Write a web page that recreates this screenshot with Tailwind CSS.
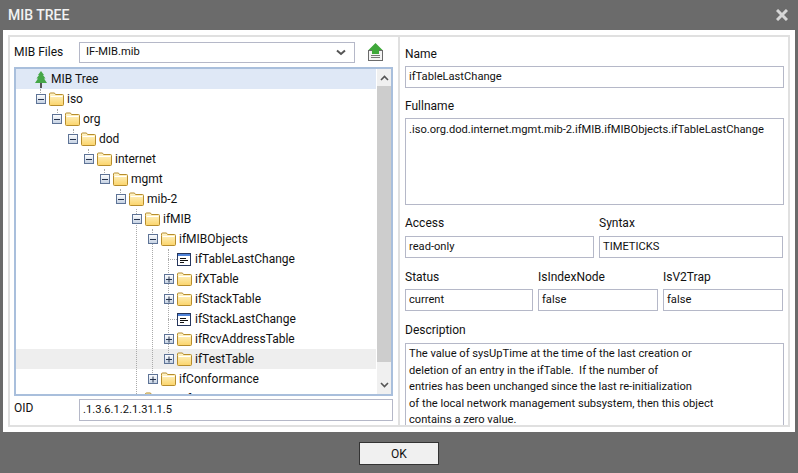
<!DOCTYPE html>
<html lang="en">
<head>
    <meta charset="UTF-8" />
    <title>MIB Tree</title>
    <script src="https://cdn.jsdelivr.net/npm/@tailwindcss/browser@4"></script>
</head>
<body class="w-[798px] h-[473px] overflow-hidden bg-[#6b6b6b] font-['Roboto',sans-serif] text-[12px] text-[#111]">

    <!-- icon sheet -->
    <svg class="absolute w-0 h-0">
        <defs>
            <linearGradient id="gFolder" x1="0" y1="0" x2="0" y2="1">
                <stop offset="0" stop-color="#fff6cf" />
                <stop offset="1" stop-color="#fbd46a" />
            </linearGradient>
            <linearGradient id="gExp" x1="0" y1="0" x2="0" y2="1">
                <stop offset="0" stop-color="#ffffff" />
                <stop offset="1" stop-color="#c3d0e2" />
            </linearGradient>
            <symbol id="folder" viewBox="0 0 15 14">
                <path d="M0.5 3.5V2Q0.5 1 1.5 1H5Q6 1 6.5 2.5H13.5Q14.5 2.5 14.5 3.5V12.5Q14.5 13.5 13.5 13.5H1.5Q0.5 13.5 0.5 12.5Z" fill="url(#gFolder)" stroke="#b78d2c" />
                <path d="M1.5 4.5H13.5" stroke="#fff" />
            </symbol>
            <symbol id="minus" viewBox="0 0 10 10">
                <rect x="0.5" y="0.5" width="9" height="9" fill="url(#gExp)" stroke="#5e7396" />
                <path d="M2 5.5H8" stroke="#26344f" />
            </symbol>
            <symbol id="plus" viewBox="0 0 10 10">
                <rect x="0.5" y="0.5" width="9" height="9" fill="url(#gExp)" stroke="#5e7396" />
                <path d="M2 5.5H8M5 2.5V8.5" stroke="#26344f" />
            </symbol>
            <symbol id="leaf" viewBox="0 0 14 13">
                <rect x="0.5" y="0.5" width="13" height="12" fill="#fff" stroke="#26365c" />
                <rect x="1" y="1" width="12" height="2" fill="#4f83d8" />
                <path d="M3 5.5H9M3 7.5H11M3 9.5H7" stroke="#111" />
            </symbol>
        </defs>
    </svg>

    <header class="h-[30px] flex items-center justify-between pl-[8px] pr-[10px]">
        <h1 class="text-[14px] font-medium text-[#f2f2f2]">MIB TREE</h1>
        <svg width="12" height="12" viewBox="0 0 12 12"><path d="M1 1L11 11M11 1L1 11" stroke="#d6d6d6" stroke-width="3" /></svg>
    </header>

    <div class="mx-[3px] h-[402px] bg-white p-[5px]">
        <div class="h-[392px] border-2 border-[#e0e0e0] flex overflow-hidden">

            <!-- left panel -->
            <section class="w-[388px] shrink-0 pl-[4px] pr-[5px] pt-[4px]">
                <div class="flex items-center h-[22px]">
                    <label class="w-[65px] shrink-0">MIB Files</label>
                    <div class="w-[276px] h-[21px] border border-[#b5b8c8] flex items-center justify-between pl-[6px] pr-[8px] text-[11.15px]">
                        <span>IF-MIB.mib</span>
                        <svg width="10" height="7" viewBox="0 0 10 7"><path d="M1 1.5L5 5L9 1.5" fill="none" stroke="#555" stroke-width="2" /></svg>
                    </div>
                    <svg class="ml-[13px]" width="15" height="18" viewBox="0 0 15 18">
                        <rect x="0.5" y="7.5" width="14" height="10" fill="#f4f4f4" stroke="#6b6b6b" />
                        <path d="M3 12.5H12M3 14.5H12" stroke="#777" />
                        <path d="M7.5 0L14.5 7H11V11H4V7H0.5Z" fill="#3fa83a" />
                    </svg>
                </div>

                <!-- tree -->
                <div class="relative mt-[4px] w-[379px] h-[329px] border-2 border-[#a9bfdc] flex overflow-hidden">
                    <div class="relative w-[360px] shrink-0 overflow-hidden">
                        <!-- dotted guides -->
                        <div class="absolute left-[8px] top-0 h-[11px] w-[8px] border-l border-b border-dotted border-[#aaa]"></div>
                        <div class="absolute left-[24px] top-[20px] h-[6px] border-l border-dotted border-[#aaa]"></div>
                        <div class="absolute left-[41px] top-[40px] h-[6px] border-l border-dotted border-[#aaa]"></div>
                        <div class="absolute left-[57px] top-[60px] h-[6px] border-l border-dotted border-[#aaa]"></div>
                        <div class="absolute left-[72px] top-[80px] h-[6px] border-l border-dotted border-[#aaa]"></div>
                        <div class="absolute left-[88px] top-[100px] h-[6px] border-l border-dotted border-[#aaa]"></div>
                        <div class="absolute left-[104px] top-[120px] h-[6px] border-l border-dotted border-[#aaa]"></div>
                        <div class="absolute left-[120px] top-[140px] h-[189px] border-l border-dotted border-[#aaa]"></div>
                        <div class="absolute left-[136px] top-[160px] h-[146px] border-l border-dotted border-[#aaa]"></div>
                        <div class="absolute left-[152px] top-[180px] h-[106px] border-l border-dotted border-[#aaa]"></div>
                        <div class="absolute left-[152px] top-[190px] w-[9px] border-t border-dotted border-[#aaa]"></div>
                        <div class="absolute left-[152px] top-[250px] w-[9px] border-t border-dotted border-[#aaa]"></div>

                        <div class="relative h-5 flex items-center bg-[#dfe8f6] pl-[19px]">
                            <svg width="12" height="17" viewBox="0 0 12 17">
                                <path d="M6 0L9 4H8L10.5 7.5H9L12 12H0L3 7.5H1.5L4 4H3Z" fill="#46a748" />
                                <rect x="5" y="12" width="2" height="5" fill="#555" />
                            </svg>
                            <span class="ml-[4px]">MIB Tree</span>
                        </div>
                        <div class="relative h-5 flex items-center pl-[20px]"><svg class="w-[10px] h-[10px]"><use href="#minus" /></svg><svg class="w-[15px] h-[14px] ml-[3px]"><use href="#folder" /></svg><span class="ml-[3px]">iso</span></div>
                        <div class="relative h-5 flex items-center pl-[36px]"><svg class="w-[10px] h-[10px]"><use href="#minus" /></svg><svg class="w-[15px] h-[14px] ml-[3px]"><use href="#folder" /></svg><span class="ml-[3px]">org</span></div>
                        <div class="relative h-5 flex items-center pl-[52px]"><svg class="w-[10px] h-[10px]"><use href="#minus" /></svg><svg class="w-[15px] h-[14px] ml-[3px]"><use href="#folder" /></svg><span class="ml-[3px]">dod</span></div>
                        <div class="relative h-5 flex items-center pl-[68px]"><svg class="w-[10px] h-[10px]"><use href="#minus" /></svg><svg class="w-[15px] h-[14px] ml-[3px]"><use href="#folder" /></svg><span class="ml-[3px]">internet</span></div>
                        <div class="relative h-5 flex items-center pl-[84px]"><svg class="w-[10px] h-[10px]"><use href="#minus" /></svg><svg class="w-[15px] h-[14px] ml-[3px]"><use href="#folder" /></svg><span class="ml-[3px]">mgmt</span></div>
                        <div class="relative h-5 flex items-center pl-[100px]"><svg class="w-[10px] h-[10px]"><use href="#minus" /></svg><svg class="w-[15px] h-[14px] ml-[3px]"><use href="#folder" /></svg><span class="ml-[3px]">mib-2</span></div>
                        <div class="relative h-5 flex items-center pl-[116px]"><svg class="w-[10px] h-[10px]"><use href="#minus" /></svg><svg class="w-[15px] h-[14px] ml-[3px]"><use href="#folder" /></svg><span class="ml-[3px]">ifMIB</span></div>
                        <div class="relative h-5 flex items-center pl-[132px]"><svg class="w-[10px] h-[10px]"><use href="#minus" /></svg><svg class="w-[15px] h-[14px] ml-[3px]"><use href="#folder" /></svg><span class="ml-[3px]">ifMIBObjects</span></div>
                        <div class="relative h-5 flex items-center pl-[161px]"><svg class="w-[14px] h-[13px]"><use href="#leaf" /></svg><span class="ml-[4px]">ifTableLastChange</span></div>
                        <div class="relative h-5 flex items-center pl-[148px]"><svg class="w-[10px] h-[10px]"><use href="#plus" /></svg><svg class="w-[15px] h-[14px] ml-[3px]"><use href="#folder" /></svg><span class="ml-[3px]">ifXTable</span></div>
                        <div class="relative h-5 flex items-center pl-[148px]"><svg class="w-[10px] h-[10px]"><use href="#plus" /></svg><svg class="w-[15px] h-[14px] ml-[3px]"><use href="#folder" /></svg><span class="ml-[3px]">ifStackTable</span></div>
                        <div class="relative h-5 flex items-center pl-[161px]"><svg class="w-[14px] h-[13px]"><use href="#leaf" /></svg><span class="ml-[4px]">ifStackLastChange</span></div>
                        <div class="relative h-5 flex items-center pl-[148px]"><svg class="w-[10px] h-[10px]"><use href="#plus" /></svg><svg class="w-[15px] h-[14px] ml-[3px]"><use href="#folder" /></svg><span class="ml-[3px]">ifRcvAddressTable</span></div>
                        <div class="h-5 flex items-center bg-[#eeeeee] pl-[148px]"><svg class="relative w-[10px] h-[10px]"><use href="#plus" /></svg><svg class="w-[15px] h-[14px] ml-[3px]"><use href="#folder" /></svg><span class="ml-[3px]">ifTestTable</span></div>
                        <div class="relative h-5 flex items-center pl-[132px]"><svg class="w-[10px] h-[10px]"><use href="#plus" /></svg><svg class="w-[15px] h-[14px] ml-[3px]"><use href="#folder" /></svg><span class="ml-[3px]">ifConformance</span></div>
                        <div class="relative h-5 flex items-center pl-[116px]"><svg class="w-[10px] h-[10px]"><use href="#plus" /></svg><svg class="w-[15px] h-[14px] ml-[3px]"><use href="#folder" /></svg><span class="ml-[3px]">interfaces</span></div>
                    </div>

                    <!-- scrollbar -->
                    <div class="w-[15px] ml-[1px] bg-[#f0f0f0] flex flex-col">
                        <div class="h-[17px] flex items-center justify-center">
                            <svg width="9" height="6" viewBox="0 0 9 6"><path d="M1 5L4.5 1.5L8 5" fill="none" stroke="#555" stroke-width="1.6" /></svg>
                        </div>
                        <div class="h-[276px] bg-[#cdcdcd]"></div>
                        <div class="flex-1 flex items-end justify-center pb-[6px]">
                            <svg width="9" height="6" viewBox="0 0 9 6"><path d="M1 1L4.5 4.5L8 1" fill="none" stroke="#555" stroke-width="1.6" /></svg>
                        </div>
                    </div>
                </div>

                <div class="flex items-center mt-[3px]">
                    <label class="w-[65px] shrink-0 -mt-[4px]">OID</label>
                    <div class="w-[314px] h-[22px] border border-[#b5b8c8] flex items-center pl-[3px] text-[11.15px]">.1.3.6.1.2.1.31.1.5</div>
                </div>
            </section>

            <!-- right panel -->
            <section class="flex-1 border-l-2 border-[#e0e0e0] pl-[5px] pr-[5px] pt-[8px] overflow-hidden">
                <div class="h-[21px]">Name</div>
                <div class="w-[379px] h-[22px] border border-[#b5b8c8] flex items-center pl-[3px] text-[11.15px]">ifTableLastChange</div>

                <div class="h-[21px] mt-[9px]">Fullname</div>
                <div class="w-[379px] h-[87px] border border-[#b5b8c8] pl-[3px] pt-[3px] text-[11.15px] whitespace-nowrap">.iso.org.dod.internet.mgmt.mib-2.ifMIB.ifMIBObjects.ifTableLastChange</div>

                <div class="flex gap-[5px] mt-[9px]">
                    <div class="w-[189px]">
                        <div class="h-[22px]">Access</div>
                        <div class="h-[22px] border border-[#b5b8c8] flex items-center pl-[3px] text-[11.15px]">read-only</div>
                    </div>
                    <div class="w-[184px]">
                        <div class="h-[22px]">Syntax</div>
                        <div class="h-[22px] border border-[#b5b8c8] flex items-center pl-[3px] text-[11.15px]">TIMETICKS</div>
                    </div>
                </div>

                <div class="flex gap-[5px] mt-[9px]">
                    <div class="w-[128px]">
                        <div class="h-[22px] pt-[1px]">Status</div>
                        <div class="h-[22px] border border-[#b5b8c8] flex items-center pl-[3px] text-[11.15px]">current</div>
                    </div>
                    <div class="w-[120px]">
                        <div class="h-[22px] pt-[1px]">IsIndexNode</div>
                        <div class="h-[22px] border border-[#b5b8c8] flex items-center pl-[3px] text-[11.15px]">false</div>
                    </div>
                    <div class="w-[120px]">
                        <div class="h-[22px] pt-[1px]">IsV2Trap</div>
                        <div class="h-[22px] border border-[#b5b8c8] flex items-center pl-[3px] text-[11.15px]">false</div>
                    </div>
                </div>

                <div class="h-[23px] mt-[9px] pt-[1px]">Description</div>
                <div class="w-[379px] h-[120px] border border-[#b5b8c8] pl-[3px] pt-[2px] text-[11.15px] leading-[16.5px] whitespace-pre">The value of sysUpTime at the time of the last creation or
deletion of an entry in the ifTable.  If the number of
entries has been unchanged since the last re-initialization
of the local network management subsystem, then this object
contains a zero value.</div>
            </section>
        </div>
    </div>

    <footer class="flex justify-center pt-[10px]">
        <button class="w-[80px] h-[23px] bg-[#f0f0f0] border border-[#333] text-[12px]">OK</button>
    </footer>
</body>
</html>
